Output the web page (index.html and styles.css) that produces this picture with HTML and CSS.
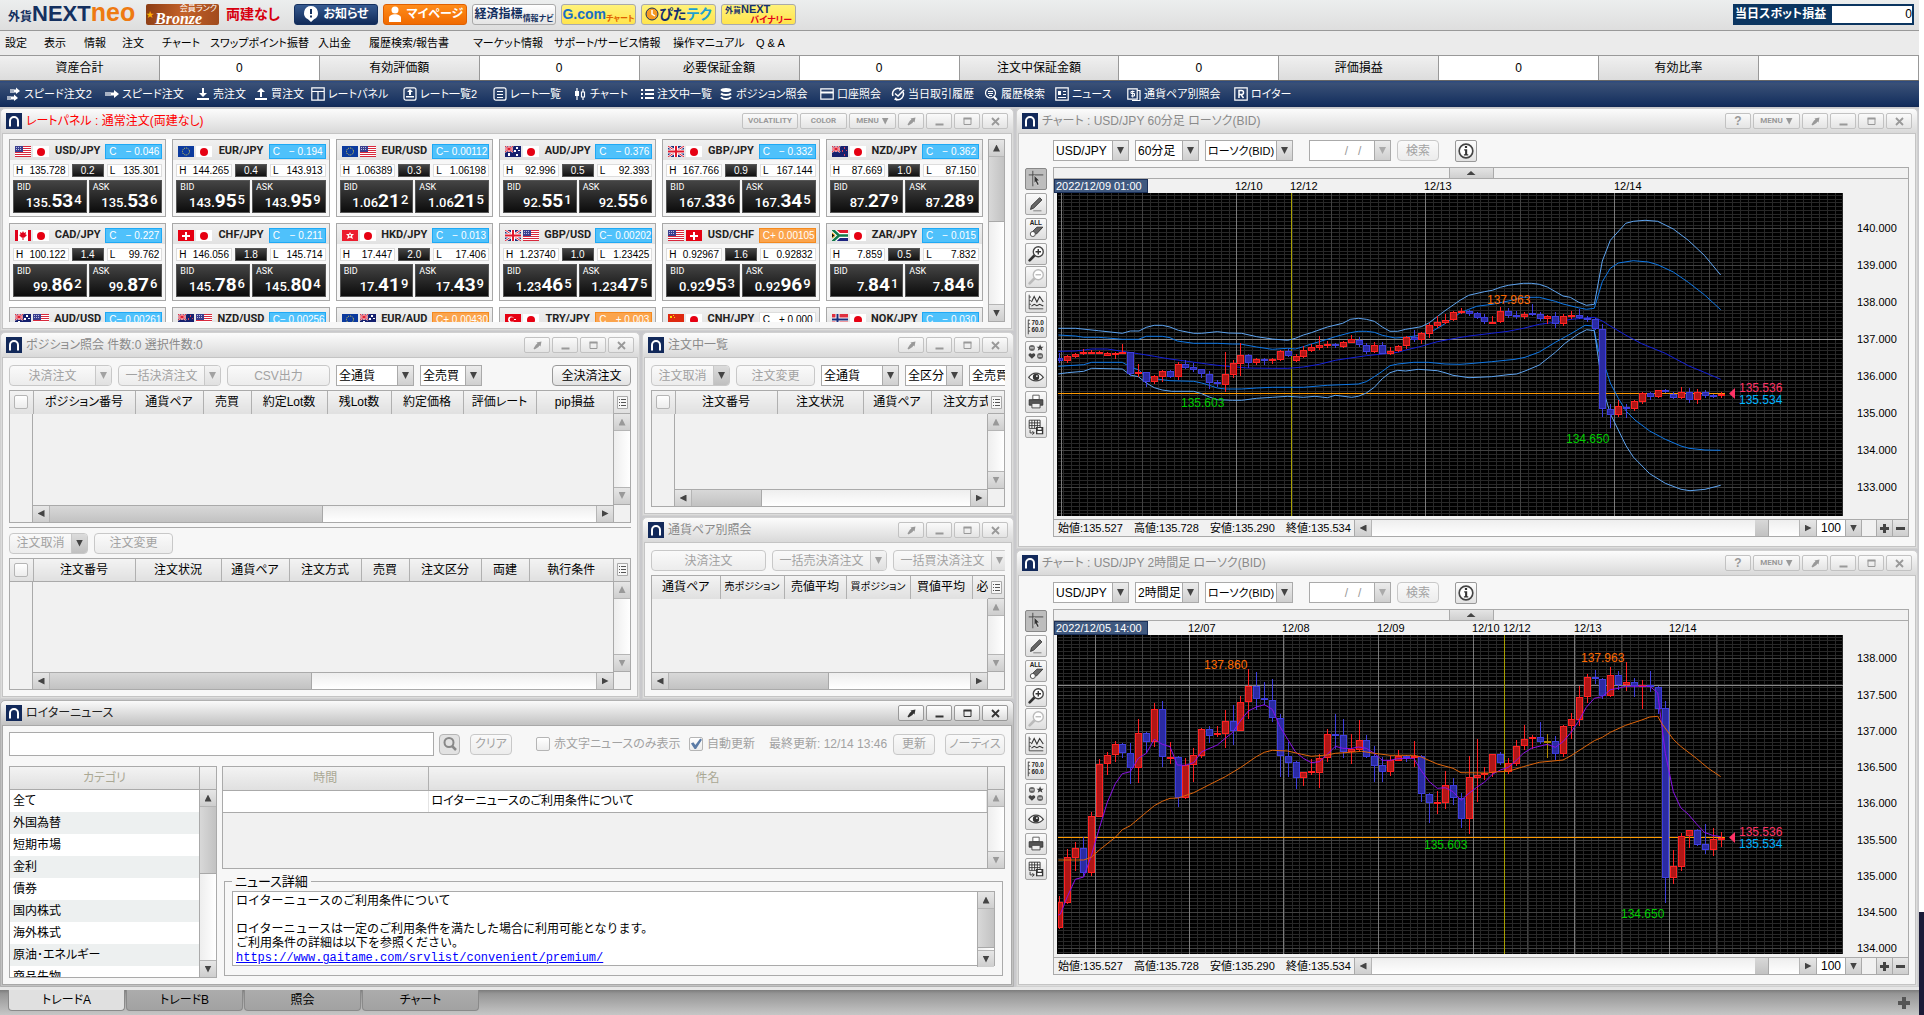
FILE: index.html
```html
<!DOCTYPE html>
<html lang="ja">
<head>
    <meta charset="UTF-8">
    <meta name="viewport" content="width=device-width, initial-scale=1.0">
    <title>外貨NEXTneo</title>
    <link rel="stylesheet" href="styles.css">
</head>
<body>
    <svg class="sprite" aria-hidden="true">
        <!-- flags -->
        <symbol id="flag-us" viewBox="0 0 16 11"><path fill="#fff" d="M0 0h16v11H0z"/><path stroke="#d8283c" d="M0 .5h16M0 2.5h16M0 4.5h16M0 6.5h16M0 8.5h16M0 10.5h16"/><path fill="#3a3f8f" d="M0 0h8v6H0z"/><path stroke="#b8bce0" stroke-dasharray="1 1" d="M1 1.5h6M1 3.5h6"/></symbol>
        <symbol id="flag-jp" viewBox="0 0 16 11"><path fill="#fff" d="M0 0h16v11H0z"/><circle cx="8" cy="6" r="4" fill="#e60012"/></symbol>
        <symbol id="flag-eu" viewBox="0 0 16 11"><path fill="#0b3a9e" d="M0 0h16v11H0z"/><circle cx="8" cy="5.5" r="3.5" fill="none" stroke="#e8d94a" stroke-dasharray="1 1"/></symbol>
        <symbol id="flag-gb" viewBox="0 0 16 11"><path fill="#1c2f7c" d="M0 0h16v11H0z"/><path stroke="#fff" stroke-width="2.4" d="M0 0l16 11M16 0L0 11"/><path stroke="#e0182d" d="M0 0l16 11M16 0L0 11"/><path stroke="#fff" stroke-width="4" d="M8 0v11M0 5.5h16"/><path stroke="#e0182d" stroke-width="2" d="M8 0v11M0 5.5h16"/></symbol>
        <symbol id="flag-au" viewBox="0 0 16 11"><path fill="#15206e" d="M0 0h16v11H0z"/><path stroke="#fff" stroke-width="2" d="M0 0l8 6M8 0L0 6M4 0v6M0 3h8"/><path stroke="#e0182d" d="M0 0l8 6M8 0L0 6M4 0v6M0 3h8"/><path fill="#fff" d="M3 7h2v3H3zM11 1h2v2h-2zM13 4h2v1h-2zM9 4h2v2H9zM11 8h2v2h-2z"/></symbol>
        <symbol id="flag-nz" viewBox="0 0 16 11"><path fill="#15206e" d="M0 0h16v11H0z"/><path stroke="#fff" stroke-width="2" d="M0 0l8 6M8 0L0 6M4 0v6M0 3h8"/><path stroke="#e0182d" d="M0 0l8 6M8 0L0 6M4 0v6M0 3h8"/><path fill="#d8405a" d="M12 1h1v2h-1zM14 4h1v1h-1zM10 4h1v2h-1zM12 8h1v2h-1z"/></symbol>
        <symbol id="flag-ca" viewBox="0 0 16 11"><path fill="#fff" d="M0 0h16v11H0z"/><path fill="#e0001b" d="M0 0h3v11H0zM13 0h3v11h-3zM8 1l1 2 2-1-.5 2.500L12 5 9.500 7.500H8.500V10h-1V7.500h-1L4 5l1.500-.5L5 2l2 1z"/></symbol>
        <symbol id="flag-ch" viewBox="0 0 16 11"><path fill="#e60012" d="M0 0h16v11H0z"/><path fill="#fff" d="M7 2h2v3h3v2H9v3H7V7H4V5h3z"/></symbol>
        <symbol id="flag-hk" viewBox="0 0 16 11"><path fill="#ec1c2e" d="M0 0h16v11H0z"/><path fill="#fff" d="M8 2l1 2h3l-2 2 1 3-3-1.500L5 9l1-3-2-2h3z"/><circle cx="8" cy="5.500" r="1" fill="#ec1c2e"/></symbol>
        <symbol id="flag-za" viewBox="0 0 16 11"><path fill="#e0182d" d="M0 0h16v5.500H0z"/><path fill="#1b2380" d="M0 5.500h16V11H0z"/><path stroke="#fff" stroke-width="5" fill="none" d="M0-1l7 6.500L0 12M7 5.500h9"/><path stroke="#117a4a" stroke-width="2.500" fill="none" d="M0-1l7 6.500L0 12M6 5.500h10"/><path fill="#111" stroke="#f5c518" d="M-1 2l4 3.500-4 3.500z"/></symbol>
        <symbol id="flag-tr" viewBox="0 0 16 11"><path fill="#e60012" d="M0 0h16v11H0z"/><circle cx="6" cy="5.500" r="3" fill="#fff"/><circle cx="7" cy="5.500" r="2.300" fill="#e60012"/><path fill="#fff" d="M9 5h2v1H9z"/></symbol>
        <symbol id="flag-cn" viewBox="0 0 16 11"><path fill="#de2910" d="M0 0h16v11H0z"/><path fill="#ffde00" d="M2 2h2v2H2zM5 1h1v1H5zM6 3h1v1H6z"/></symbol>
        <symbol id="flag-no" viewBox="0 0 16 11"><path fill="#e0303f" d="M0 0h16v11H0z"/><path stroke="#fff" stroke-width="4" d="M5.500 0v11M0 5.500h16"/><path stroke="#1b2f7c" stroke-width="2" d="M5.500 0v11M0 5.500h16"/></symbol>

        <!-- window chrome -->
        <symbol id="app" viewBox="0 0 16 16"><path fill="#12295a" d="M0 0h16v16H0z"/><path fill="none" stroke="#fff" stroke-width="2" d="M4 13.500V8a4 4 0 0 1 8 0v5.500"/></symbol>
        <symbol id="pin" viewBox="0 0 9 9"><path fill="currentColor" d="M8.500.5L7.500 5.500 6.300 4.600 5.500 6 1.500 8.500.5 7.500 3 3.500l1.400-.8L3.500 1.500z"/></symbol>
        <symbol id="min" viewBox="0 0 9 9"><path fill="currentColor" d="M.5 6.500h8v2h-8z"/></symbol>
        <symbol id="max" viewBox="0 0 9 9"><path fill="none" stroke="currentColor" d="M1 1.500h7v6H1z"/><path fill="currentColor" d="M.5.5h8v2h-8z"/></symbol>
        <symbol id="close" viewBox="0 0 9 9"><path stroke="currentColor" stroke-width="1.800" d="M1 1l7 7M8 1L1 8"/></symbol>
        <symbol id="list" viewBox="0 0 11 13"><path fill="#f7f7f7" stroke="#aaa" d="M.5.5h10v12H.5z"/><path stroke="#555" d="M4 3.500h5M4 6.500h5M4 9.500h5M2 3.500h1M2 6.500h1M2 9.500h1"/></symbol>

        <!-- toolbar -->
        <symbol id="t-speed2" viewBox="0 0 14 14"><path stroke="#fff" stroke-width="1.200" d="M4 2v4M6 2v4M1 9v4M3 9v4"/><path fill="#fff" d="M7 2.500h2V.5L13 4 9 7V5.500H7zM4 9.500h3v-2l4 3.500-4 3v-1.500H4z"/></symbol>
        <symbol id="t-speed" viewBox="0 0 14 14"><path stroke="#fff" stroke-width="1.200" d="M1 5v4M3 5v4M5 5v4"/><path fill="#fff" d="M6 5.500h3V3l5 4-5 4V8.500H6z"/></symbol>
        <symbol id="t-sell" viewBox="0 0 14 14"><path fill="#fff" d="M6 1h2v5h3L7 10 3 6h3zM1 11h12v2H1z"/></symbol>
        <symbol id="t-buy" viewBox="0 0 14 14"><path fill="#fff" d="M7 1l4 4H8v5H6V5H3zM1 11h12v2H1z"/></symbol>
        <symbol id="t-panel" viewBox="0 0 14 14"><path fill="none" stroke="#fff" stroke-width="1.200" d="M.8.8h12.400v12.400H.8zM.8 4.500h12.400M7 4.500v9"/></symbol>
        <symbol id="t-rate2" viewBox="0 0 14 14"><rect x="1" y=".8" width="12" height="12.400" rx="2" fill="none" stroke="#fff" stroke-width="1.200"/><path fill="#fff" d="M7 2l3 3H8v3H6V5H4zM3 9h8v1.500H3z"/></symbol>
        <symbol id="t-rate" viewBox="0 0 14 14"><rect x="1" y=".8" width="12" height="12.400" rx="2" fill="none" stroke="#fff" stroke-width="1.200"/><path stroke="#fff" d="M4 4.500h6M4 7.500h6M4 10.500h6"/></symbol>
        <symbol id="t-chart" viewBox="0 0 14 14"><path stroke="#fff" stroke-width="1.200" d="M4 1v12M10 2v11"/><path fill="#fff" d="M2 4h4v5H2z"/><path fill="#1c3867" stroke="#fff" stroke-width="1.200" d="M8.500 5h3v5h-3z"/></symbol>
        <symbol id="t-orders" viewBox="0 0 14 14"><path stroke="#fff" stroke-width="1.800" d="M1 3h2M5 3h9M1 7h2M5 7h9M1 11h2M5 11h9"/></symbol>
        <symbol id="t-position" viewBox="0 0 14 14"><ellipse cx="7" cy="3" rx="5.500" ry="2" fill="#fff"/><path fill="none" stroke="#fff" stroke-width="2" d="M2 6.500c2 2 8 2 10 0M2 10c2 2.500 8 2.500 10 0"/></symbol>
        <symbol id="t-account" viewBox="0 0 14 14"><path fill="none" stroke="#fff" stroke-width="1.200" d="M.8 1.800h12.400v10.400H.8z"/><path fill="#fff" d="M.8 4.500h12.400v2H.8z"/></symbol>
        <symbol id="t-history" viewBox="0 0 14 14"><path fill="none" stroke="#fff" stroke-width="1.500" d="M2 9a5.500 5.500 0 0 1 7-7.300M12 5a5.500 5.500 0 0 1-7 7.300"/><path fill="none" stroke="#fff" stroke-width="1.500" d="M4 6.500L7 9l6-6"/><path fill="#fff" d="M9 0l2.500 2L8 4zM5 10l-2 2.500L6.500 14z"/></symbol>
        <symbol id="t-search" viewBox="0 0 14 14"><circle cx="6.500" cy="6" r="5" fill="none" stroke="#fff" stroke-width="1.200"/><path stroke="#fff" d="M4 4.500h5M4 6.500h5M5 8.500h3"/><path stroke="#fff" stroke-width="2" d="M10 10l3 3"/></symbol>
        <symbol id="t-news" viewBox="0 0 14 14"><path fill="none" stroke="#fff" stroke-width="1.200" d="M.8.8h12.400v12.400H.8z"/><path stroke="#fff" d="M8 4.500h3M8 7.500h3M3 10.500h8"/><path fill="#fff" d="M3 4h3v4H3z"/></symbol>
        <symbol id="t-pair" viewBox="0 0 14 14"><path fill="none" stroke="#fff" stroke-width="1.200" d="M.8 1.800h9.400v10.400H.8zM10 3.500h3v10H5"/><path fill="none" stroke="#fff" d="M7.500 4.500H4v2h3.500v2.500H4M5.700 3.500v7"/></symbol>
        <symbol id="t-reuters" viewBox="0 0 14 14"><path fill="none" stroke="#fff" stroke-width="1.200" d="M.8.8h12.400v12.400H.8z"/><path fill="none" stroke="#fff" stroke-width="1.500" d="M5 11V3.500h2.500a2 2 0 0 1 0 4H5M7 7.500L9.500 11"/></symbol>

        <!-- chart tools -->
        <symbol id="c-cursor" viewBox="0 0 22 22"><path stroke="#444" d="M3 6.500h16M7.500 2v17"/><path fill="#333" stroke="#eee" stroke-width=".6" d="M9 7l6 6h-2.500l2 4-2 1-2-4L9 16z"/></symbol>
        <symbol id="c-pencil" viewBox="0 0 22 22"><path fill="#666" stroke="#333" d="M5 17l1-4 9-9 2.500 2.500-9 9z"/><path stroke="#777" d="M8 18.500h9"/></symbol>
        <symbol id="c-eraser" viewBox="0 0 22 22"><text x="4" y="7" class="icon-text">ALL</text><path fill="#666" stroke="#333" d="M6 15l6-6h6.500l-7 7.500z"/><circle cx="7.500" cy="16.500" r="2.800" fill="#fff" stroke="#444"/></symbol>
        <symbol id="c-zoomin" viewBox="0 0 22 22"><path stroke="#333" stroke-width="3" stroke-linecap="round" d="M4 18l5-5"/><circle cx="13.500" cy="8.500" r="5.500" fill="#fff" stroke="#444" stroke-width="1.500"/><path stroke="#333" stroke-width="1.500" d="M10.500 8.500h6M13.500 5.500v6"/></symbol>
        <symbol id="c-zoomout" viewBox="0 0 22 22"><path stroke="#bbb" stroke-width="3" stroke-linecap="round" d="M4 18l5-5"/><circle cx="13.500" cy="8.500" r="5.500" fill="#fff" stroke="#bbb" stroke-width="1.500"/><path stroke="#bbb" stroke-width="1.500" d="M10.500 8.500h6"/></symbol>
        <symbol id="c-lines" viewBox="0 0 22 22"><path fill="none" stroke="#444" d="M3.500 3v15.500H19M3.500 5.500h2M3.500 9.500h2M3.500 13.500h2"/><path fill="none" stroke="#333" stroke-width="1.200" d="M6 11l3-6 3 6 3-6 4 6M6 15.500l3-2 3 1.500 3-1.500 4 2"/></symbol>
        <symbol id="c-scale" viewBox="0 0 22 22"><path fill="none" stroke="#444" d="M2.500 3v16M2.500 3.500h2M2.500 7.500h2M2.500 11.500h2M2.500 15.500h2"/><text x="6" y="9" class="icon-text">70.0</text><text x="6" y="17" class="icon-text">60.0</text></symbol>
        <symbol id="c-shapes" viewBox="0 0 22 22"><circle cx="6.500" cy="6.500" r="3.300" fill="#666"/><path fill="#444" d="M15.500 2.500l1.200 2.600h2.800l-2.200 1.800.8 2.800-2.600-1.600-2.600 1.600.8-2.800-2.200-1.800h2.800zM6.500 18.500L3 15c-1-2 2-4 3.500-1.500C8 11 11 13 10 15z"/><circle cx="15.500" cy="15.500" r="3.300" fill="#666"/><path stroke="#fff" d="M4.500 6.500h4M13.500 15.500h4"/></symbol>
        <symbol id="c-eye" viewBox="0 0 22 22"><path fill="#fff" stroke="#444" stroke-width="1.400" d="M3 11.500c4-6.500 12-6.500 16 0-4 5-12 5-16 0z"/><circle cx="11" cy="11" r="3.500" fill="#333"/><circle cx="12" cy="10" r="1" fill="#fff"/></symbol>
        <symbol id="c-print" viewBox="0 0 22 22"><path fill="#fff" stroke="#555" d="M7.500 3.500h7v5h-7z"/><path fill="#555" stroke="#333" d="M3.500 8.500h15v6h-15z"/><path fill="#eee" stroke="#444" d="M6.500 12.500h9v5h-9z"/></symbol>
        <symbol id="c-save" viewBox="0 0 22 22"><path fill="#fff" stroke="#333" d="M3.500 3.500h12v9h-12zM3.500 6.500h12M3.500 9.500h12M6.500 3.500v9M9.500 3.500v9M12.500 3.500v9"/><path fill="none" stroke="#333" d="M4.500 14v3.500H9M7 15.500l2 2-2 2"/><path fill="#333" d="M11 11h8v8h-8z"/><path fill="#fff" d="M13 12h4v2h-4zM12.500 15.500h5V18h-5z"/></symbol>
        <symbol id="c-info" viewBox="0 0 22 22"><circle cx="11" cy="11" r="7.500" fill="#fff" stroke="#444" stroke-width="1.800"/><path fill="#333" d="M9.800 5.500h2.400v2.200H9.800zM9 9h3.300v5.500h1.200V16H8.700v-1.500H10v-4H9z"/></symbol>
    </svg>

    <div class="app">
        <header class="topbar">
            <a class="logo" href="#"><span class="logo-small">外貨</span><span class="logo-next">NEXT</span><span class="logo-neo">neo</span></a>
            <a class="rank" href="#"><span class="rank-star">★</span><span class="rank-name">Bronze</span><span class="rank-label">会員ランク</span></a>
            <strong class="hedge">両建なし</strong>
            <nav class="banners">
                <a class="banner banner-navy" href="#"><svg viewBox="0 0 16 18"><path fill="#fff" d="M8 1a7 7 0 0 1 3 13.300L8 17l-3-2.700A7 7 0 0 1 8 1z"/><path fill="#14305f" d="M7 4h2v5H7zM7 10.500h2v2H7z"/></svg>お知らせ</a>
                <a class="banner banner-orange" href="#"><svg viewBox="0 0 14 18"><circle cx="7" cy="5" r="3.500" fill="#fff"/><path fill="#fff" d="M1 17v-4c0-5 12-5 12 0v4z"/></svg>マイページ</a>
                <a class="banner banner-white" href="#"><span>経済指標</span><small>情報ナビ</small></a>
                <a class="banner banner-yellow banner-gcom" href="#"><span>G.com</span><small>チャート</small></a>
                <a class="banner banner-yellow banner-pita" href="#"><svg viewBox="0 0 14 14"><circle cx="7" cy="7" r="6" fill="#f59a23" stroke="#14305f"/><path fill="none" stroke="#fff" stroke-width="1.500" d="M7 3v4l3 2"/></svg><span>ぴた<i>テク</i></span></a>
                <a class="banner banner-yellow banner-binary" href="#"><span>外貨<b>NEXT</b></span><small>バイナリー</small></a>
            </nav>
            <div class="spot">
                <label for="spot">当日スポット損益</label>
                <input id="spot" type="text" value="0" readonly>
            </div>
        </header>

        <nav class="menu">
            <a href="#">設定</a><a href="#">表示</a><a href="#">情報</a><a href="#">注文</a><a href="#">チャート</a><a href="#">スワップポイント振替</a><a href="#">入出金</a><a href="#">履歴検索/報告書</a><a href="#">マーケット情報</a><a href="#">サポート/サービス情報</a><a href="#">操作マニュアル</a><a href="#">Q &amp; A</a>
        </nav>

        <dl class="assets">
            <dt>資産合計</dt><dd>0</dd>
            <dt>有効評価額</dt><dd>0</dd>
            <dt>必要保証金額</dt><dd>0</dd>
            <dt>注文中保証金額</dt><dd>0</dd>
            <dt>評価損益</dt><dd>0</dd>
            <dt>有効比率</dt><dd></dd>
        </dl>

        <nav class="toolbar">
            <a href="#"><svg><use href="#t-speed2"/></svg>スピード注文2</a>
            <a href="#"><svg><use href="#t-speed"/></svg>スピード注文</a>
            <a href="#"><svg><use href="#t-sell"/></svg>売注文</a>
            <a href="#"><svg><use href="#t-buy"/></svg>買注文</a>
            <a href="#"><svg><use href="#t-panel"/></svg>レートパネル</a>
            <a href="#"><svg><use href="#t-rate2"/></svg>レート一覧2</a>
            <a href="#"><svg><use href="#t-rate"/></svg>レート一覧</a>
            <a href="#"><svg><use href="#t-chart"/></svg>チャート</a>
            <a href="#"><svg><use href="#t-orders"/></svg>注文中一覧</a>
            <a href="#"><svg><use href="#t-position"/></svg>ポジション照会</a>
            <a href="#"><svg><use href="#t-account"/></svg>口座照会</a>
            <a href="#"><svg><use href="#t-history"/></svg>当日取引履歴</a>
            <a href="#"><svg><use href="#t-search"/></svg>履歴検索</a>
            <a href="#"><svg><use href="#t-news"/></svg>ニュース</a>
            <a href="#"><svg><use href="#t-pair"/></svg>通貨ペア別照会</a>
            <a href="#"><svg><use href="#t-reuters"/></svg>ロイター</a>
        </nav>

        <main class="desktop">
            <div class="left">
                <section class="window">
                    <div class="titlebar alert">
                        <svg class="app-icon"><use href="#app"/></svg>
                        <h2>レートパネル : 通常注文(両建なし)</h2>
                        <button class="w56 wide">VOLATILITY</button>
                        <button class="w47 wide">COLOR</button>
                        <button class="w47 wide">MENU <i class="down"></i></button>
                        <span class="controls"></span>
                    </div>
                    <div class="content rates">
                        <div class="cards" id="cards"></div>
                        <div class="vscroll">
                            <button aria-label="上へ"><i class="up"></i></button>
                            <div class="track"><div class="thumb" style="height: 44%"></div></div>
                            <button aria-label="下へ"><i class="down"></i></button>
                        </div>
                    </div>
                </section>

                <div class="middle">
                    <section class="window">
                        <div class="titlebar">
                            <svg class="app-icon"><use href="#app"/></svg>
                            <h2>ポジション照会 件数:0 選択件数:0</h2>
                            <span class="controls"></span>
                        </div>
                        <div class="content">
                            <div class="tools">
                                <div class="split w103"><button disabled>決済注文</button><button class="drop" disabled aria-label="決済注文の種類"><i class="down"></i></button></div>
                                <div class="split w103"><button disabled>一括決済注文</button><button class="drop" disabled aria-label="一括決済注文の種類"><i class="down"></i></button></div>
                                <button class="btn w103" disabled>CSV出力</button>
                                <span class="combo w78"><select aria-label="通貨"><option>全通貨</option></select><i class="down"></i></span>
                                <span class="combo w62"><select aria-label="売買"><option>全売買</option></select><i class="down"></i></span>
                                <button class="btn w79 push">全決済注文</button>
                            </div>
                            <div class="listing">
                                <div class="head">
                                    <table>
                                        <thead><tr><th class="w23"><input type="checkbox" aria-label="全選択"></th><th class="w102">ポジション番号</th><th class="w68">通貨ペア</th><th class="w48">売買</th><th class="w76">約定Lot数</th><th class="w64">残Lot数</th><th class="w72">約定価格</th><th class="w73">評価レート</th><th>pip損益</th></tr></thead>
                                    </table>
                                </div>
                                <button class="corner" aria-label="表示項目"><svg><use href="#list"/></svg></button>
                                <div class="rows frozen"></div>
                                <div class="vscroll off">
                                    <button disabled aria-label="上へ"><i class="up"></i></button>
                                    <div class="track"></div>
                                    <button disabled aria-label="下へ"><i class="down"></i></button>
                                </div>
                                <div class="hscroll frozen">
                                    <button aria-label="左へ"><i class="lt"></i></button>
                                    <div class="track"><div class="thumb" style="width: 50%"></div></div>
                                    <button aria-label="右へ"><i class="rt"></i></button>
                                </div>
                            </div>
                            <hr>
                            <div class="tools">
                                <div class="split w79"><button disabled>注文取消</button><button class="drop on" aria-label="注文取消の種類"><i class="down"></i></button></div>
                                <button class="btn w79" disabled>注文変更</button>
                            </div>
                            <div class="listing">
                                <div class="head">
                                    <table>
                                        <thead><tr><th class="w23"><input type="checkbox" aria-label="全選択"></th><th class="w102">注文番号</th><th class="w86">注文状況</th><th class="w68">通貨ペア</th><th class="w72">注文方式</th><th class="w48">売買</th><th class="w72">注文区分</th><th class="w48">両建</th><th>執行条件</th></tr></thead>
                                    </table>
                                </div>
                                <button class="corner" aria-label="表示項目"><svg><use href="#list"/></svg></button>
                                <div class="rows frozen"></div>
                                <div class="vscroll off">
                                    <button disabled aria-label="上へ"><i class="up"></i></button>
                                    <div class="track"></div>
                                    <button disabled aria-label="下へ"><i class="down"></i></button>
                                </div>
                                <div class="hscroll frozen">
                                    <button aria-label="左へ"><i class="lt"></i></button>
                                    <div class="track"><div class="thumb" style="width: 48%"></div></div>
                                    <button aria-label="右へ"><i class="rt"></i></button>
                                </div>
                            </div>
                        </div>
                    </section>

                    <div class="orders">
                        <section class="window">
                            <div class="titlebar">
                                <svg class="app-icon"><use href="#app"/></svg>
                                <h2>注文中一覧</h2>
                                <span class="controls"></span>
                            </div>
                            <div class="content">
                                <div class="tools">
                                    <div class="split w79"><button disabled>注文取消</button><button class="drop on" aria-label="注文取消の種類"><i class="down"></i></button></div>
                                    <button class="btn w79" disabled>注文変更</button>
                                    <span class="combo w78"><select aria-label="通貨"><option>全通貨</option></select><i class="down"></i></span>
                                    <span class="combo w58"><select aria-label="区分"><option>全区分</option></select><i class="down"></i></span>
                                    <span class="combo w62"><select aria-label="売買"><option>全売買</option></select><i class="down"></i></span>
                                </div>
                                <div class="listing">
                                    <div class="head">
                                        <table class="w351">
                                            <thead><tr><th class="w23"><input type="checkbox" aria-label="全選択"></th><th class="w102">注文番号</th><th class="w86">注文状況</th><th class="w68">通貨ペア</th><th class="w72">注文方式</th></tr></thead>
                                        </table>
                                    </div>
                                    <button class="corner" aria-label="表示項目"><svg><use href="#list"/></svg></button>
                                    <div class="rows frozen"></div>
                                    <div class="vscroll off">
                                        <button disabled aria-label="上へ"><i class="up"></i></button>
                                        <div class="track"></div>
                                        <button disabled aria-label="下へ"><i class="down"></i></button>
                                    </div>
                                    <div class="hscroll frozen">
                                        <button aria-label="左へ"><i class="lt"></i></button>
                                        <div class="track"><div class="thumb" style="width: 25%"></div></div>
                                        <button aria-label="右へ"><i class="rt"></i></button>
                                    </div>
                                </div>
                            </div>
                        </section>

                        <section class="window">
                            <div class="titlebar">
                                <svg class="app-icon"><use href="#app"/></svg>
                                <h2>通貨ペア別照会</h2>
                                <span class="controls"></span>
                            </div>
                            <div class="content">
                                <div class="tools">
                                    <button class="btn w115" disabled>決済注文</button>
                                    <div class="split w115"><button disabled>一括売決済注文</button><button class="drop" disabled aria-label="一括売決済注文の種類"><i class="down"></i></button></div>
                                    <div class="split w115"><button disabled>一括買決済注文</button><button class="drop" disabled aria-label="一括買決済注文の種類"><i class="down"></i></button></div>
                                </div>
                                <div class="listing">
                                    <div class="head">
                                        <table class="w378">
                                            <thead><tr><th class="w68">通貨ペア</th><th class="w64 tight">売ポジション</th><th class="w62">売値平均</th><th class="w64 tight">買ポジション</th><th class="w62">買値平均</th><th class="w58 first">必要額</th></tr></thead>
                                        </table>
                                    </div>
                                    <button class="corner" aria-label="表示項目"><svg><use href="#list"/></svg></button>
                                    <div class="rows"></div>
                                    <div class="vscroll off">
                                        <button disabled aria-label="上へ"><i class="up"></i></button>
                                        <div class="track"></div>
                                        <button disabled aria-label="下へ"><i class="down"></i></button>
                                    </div>
                                    <div class="hscroll">
                                        <button aria-label="左へ"><i class="lt"></i></button>
                                        <div class="track"><div class="thumb" style="width: 53%"></div></div>
                                        <button aria-label="右へ"><i class="rt"></i></button>
                                    </div>
                                </div>
                            </div>
                        </section>
                    </div>
                </div>

                <section class="window active">
                    <div class="titlebar">
                        <svg class="app-icon"><use href="#app"/></svg>
                        <h2>ロイターニュース</h2>
                        <span class="controls"></span>
                    </div>
                    <div class="content">
                        <form class="news-search">
                            <input class="keyword" type="text" aria-label="キーワード">
                            <button class="btn find" type="button" aria-label="検索"><svg viewBox="0 0 16 16"><circle cx="7" cy="6.500" r="4.500" fill="none" stroke="#888" stroke-width="2"/><path stroke="#888" stroke-width="2.500" d="M10 10l4 4"/></svg></button>
                            <button class="btn w42" type="button" disabled>クリア</button>
                            <label class="red-only"><input type="checkbox" disabled>赤文字ニュースのみ表示</label>
                            <label class="auto"><input type="checkbox" checked disabled>自動更新</label>
                            <span class="updated">最終更新: 12/14 13:46</span>
                            <button class="btn w42" type="button" disabled>更新</button>
                            <button class="btn w60" type="button" disabled>ノーティス</button>
                        </form>
                        <div class="news">
                            <div class="categories">
                                <div class="list-head">カテゴリ</div>
                                <div class="list-corner"></div>
                                <ul>
                                    <li>全て</li><li>外国為替</li><li>短期市場</li><li>金利</li><li>債券</li><li>国内株式</li><li>海外株式</li><li>原油･エネルギー</li><li>商品先物</li>
                                </ul>
                                <div class="vscroll">
                                    <button aria-label="上へ"><i class="up"></i></button>
                                    <div class="track"><div class="thumb" style="height: 44%"></div></div>
                                    <button aria-label="下へ"><i class="down"></i></button>
                                </div>
                            </div>
                            <div class="articles">
                                <div class="headlines">
                                    <table>
                                        <thead><tr><th class="w205">時間</th><th>件名</th></tr></thead>
                                        <tbody><tr><td></td><td>ロイターニュースのご利用条件について</td></tr></tbody>
                                    </table>
                                    <div class="side">
                                        <div class="list-corner"></div>
                                        <div class="vscroll off">
                                            <button disabled aria-label="上へ"><i class="up"></i></button>
                                            <div class="track"></div>
                                            <button disabled aria-label="下へ"><i class="down"></i></button>
                                        </div>
                                    </div>
                                </div>
                                <fieldset>
                                    <legend>ニュース詳細</legend>
                                    <div class="detail">
                                        <p>ロイターニュースのご利用条件について<br><br>ロイターニュースは一定のご利用条件を満たした場合に利用可能となります。<br>ご利用条件の詳細は以下を参照ください。<br><a href="#">https://www.gaitame.com/srvlist/convenient/premium/</a></p>
                                        <div class="vscroll">
                                            <button aria-label="上へ"><i class="up"></i></button>
                                            <div class="track"><div class="thumb" style="height: 94%"></div></div>
                                            <button aria-label="下へ"><i class="down"></i></button>
                                        </div>
                                    </div>
                                </fieldset>
                            </div>
                        </div>
                    </div>
                </section>
            </div>

            <div class="right">
                <section class="window">
                    <div class="titlebar">
                        <svg class="app-icon"><use href="#app"/></svg>
                        <h2>チャート : USD/JPY 60分足 ローソク(BID)</h2>
                        <button class="w26 help">?</button>
                        <button class="w47 wide">MENU <i class="down"></i></button>
                        <span class="controls"></span>
                    </div>
                    <div class="content chart">
                        <div class="toolbox"></div>
                        <div class="chart-tools">
                            <span class="combo w76"><select aria-label="通貨ペア"><option>USD/JPY</option></select><i class="down"></i></span>
                            <span class="combo w64"><select aria-label="足種"><option>60分足</option></select><i class="down"></i></span>
                            <span class="combo w88"><select aria-label="チャート種類"><option>ローソク(BID)</option></select><i class="down"></i></span>
                            <span class="combo date off"><input type="text" value="/   /" disabled aria-label="日付"><i class="down"></i></span>
                            <button class="btn w42" disabled>検索</button>
                            <button class="btn info" aria-label="情報"><svg><use href="#c-info"/></svg></button>
                        </div>
                        <div class="chart-box">
                            <div class="fold"><button aria-label="折りたたむ"><i class="up"></i></button></div>
                            <svg class="plot" id="chart60"></svg>
                            <div class="chart-foot">
                                <div class="ohlc"><span>始値:135.527</span><span>高値:135.728</span><span>安値:135.290</span><span>終値:135.534</span></div>
                                <div class="hscroll">
                                    <button aria-label="左へ"><i class="lt"></i></button>
                                    <div class="track end"><div class="thumb" style="width: 14px"></div></div>
                                    <button aria-label="右へ"><i class="rt"></i></button>
                                </div>
                                <input class="count" type="text" value="100" aria-label="表示本数">
                                <button class="mini" aria-label="表示本数を選択"><i class="down"></i></button>
                                <span class="gap"></span>
                                <button class="mini sign" aria-label="拡大"><svg viewBox="0 0 9 9"><path stroke="#444" stroke-width="3" d="M0 4.500h9M4.500 0v9"/></svg></button>
                                <button class="mini sign" aria-label="縮小"><svg viewBox="0 0 9 9"><path stroke="#444" stroke-width="3" d="M0 4.500h9"/></svg></button>
                            </div>
                        </div>
                    </div>
                </section>

                <section class="window">
                    <div class="titlebar">
                        <svg class="app-icon"><use href="#app"/></svg>
                        <h2>チャート : USD/JPY 2時間足 ローソク(BID)</h2>
                        <button class="w26 help">?</button>
                        <button class="w47 wide">MENU <i class="down"></i></button>
                        <span class="controls"></span>
                    </div>
                    <div class="content chart">
                        <div class="toolbox"></div>
                        <div class="chart-tools">
                            <span class="combo w76"><select aria-label="通貨ペア"><option>USD/JPY</option></select><i class="down"></i></span>
                            <span class="combo w64"><select aria-label="足種"><option>2時間足</option></select><i class="down"></i></span>
                            <span class="combo w88"><select aria-label="チャート種類"><option>ローソク(BID)</option></select><i class="down"></i></span>
                            <span class="combo date off"><input type="text" value="/   /" disabled aria-label="日付"><i class="down"></i></span>
                            <button class="btn w42" disabled>検索</button>
                            <button class="btn info" aria-label="情報"><svg><use href="#c-info"/></svg></button>
                        </div>
                        <div class="chart-box">
                            <div class="fold"><button aria-label="折りたたむ"><i class="up"></i></button></div>
                            <svg class="plot" id="chart120"></svg>
                            <div class="chart-foot">
                                <div class="ohlc"><span>始値:135.527</span><span>高値:135.728</span><span>安値:135.290</span><span>終値:135.534</span></div>
                                <div class="hscroll">
                                    <button aria-label="左へ"><i class="lt"></i></button>
                                    <div class="track end"><div class="thumb" style="width: 14px"></div></div>
                                    <button aria-label="右へ"><i class="rt"></i></button>
                                </div>
                                <input class="count" type="text" value="100" aria-label="表示本数">
                                <button class="mini" aria-label="表示本数を選択"><i class="down"></i></button>
                                <span class="gap"></span>
                                <button class="mini sign" aria-label="拡大"><svg viewBox="0 0 9 9"><path stroke="#444" stroke-width="3" d="M0 4.500h9M4.500 0v9"/></svg></button>
                                <button class="mini sign" aria-label="縮小"><svg viewBox="0 0 9 9"><path stroke="#444" stroke-width="3" d="M0 4.500h9"/></svg></button>
                            </div>
                        </div>
                    </div>
                </section>
            </div>
        </main>

        <footer class="tabs">
            <button class="tab current">トレードA</button>
            <button class="tab">トレードB</button>
            <button class="tab">照会</button>
            <button class="tab">チャート</button>
            <button class="add" aria-label="タブを追加"><svg viewBox="0 0 12 12"><path stroke="#555" stroke-width="4" d="M0 6h12M6 0v12"/></svg></button>
        </footer>
    </div>
    <div class="edge"></div>

    <script src="script.js"></script>
</body>
</html>
```

FILE: styles.css
```css
/* General Styles */
* {
    box-sizing: border-box;
}

body {
    margin: 0;
    display: flex;
    height: 100vh;
    overflow: hidden;
    font-family: "Liberation Sans", "Noto Sans CJK JP", sans-serif;
    font-size: 12px;
    line-height: 16px;
    font-feature-settings: "palt";
    color: #000;
    background: #fff;
}

button, input, select {
    font: inherit;
    font-feature-settings: inherit;
    color: inherit;
    margin: 0;
    padding: 0;
    border: 0;
    border-radius: 0;
    background: none;
    min-width: 0;
    outline: none;
}

a {
    color: inherit;
    text-decoration: none;
}

svg {
    display: block;
}

.sprite {
    display: none;
}

.app {
    flex: 1;
    min-width: 0;
    display: flex;
    flex-direction: column;
    background: #c9c9cc;
}

.edge {
    width: 5px;
    background: linear-gradient(#fff 912px, #1b1b38 912px);
}

/* Arrows */
.up, .down, .lt, .rt {
    display: block;
    width: 7px;
    height: 7px;
    background: #444;
}

.down { clip-path: polygon(0 0, 100% 0, 50% 100%); }
.up { clip-path: polygon(50% 0, 100% 100%, 0 100%); }
.lt { clip-path: polygon(0 50%, 100% 0, 100% 100%); }
.rt { clip-path: polygon(0 0, 100% 50%, 0 100%); }

/* Shared widths */
.w23 { width: 23px; }
.w26 { width: 26px; }
.w42 { width: 42px; }
.w47 { width: 47px; }
.w48 { width: 48px; }
.w56 { width: 56px; }
.w58 { width: 58px; }
.w60 { width: 60px; }
.w62 { width: 62px; }
.w64 { width: 64px; }
.w68 { width: 68px; }
.w72 { width: 72px; }
.w73 { width: 73px; }
.w76 { width: 76px; }
.w78 { width: 78px; }
.w79 { width: 79px; }
.w86 { width: 86px; }
.w88 { width: 88px; }
.w102 { width: 102px; }
.w103 { width: 103px; }
.w115 { width: 115px; }
.w205 { width: 205px; }

/* Top bar */
.topbar {
    height: 31px;
    display: flex;
    align-items: center;
    padding: 0 5px 2px 8px;
    background: linear-gradient(#eceeee, #dedede);
    border-bottom: 1px solid #999;
}

.logo {
    display: flex;
    align-items: baseline;
    width: 138px;
    color: #14305f;
    font-weight: bold;
    line-height: 26px;
}

.logo-small { font-size: 12px; }
.logo-next { font-size: 22px; }
.logo-neo { font-size: 25px; color: #ee7a12; }

.rank {
    display: grid;
    grid-template-columns: 9px 1fr;
    grid-template-rows: 9px 12px;
    width: 73px;
    height: 21px;
    color: #fff;
    background: linear-gradient(100deg, #8a3c14, #c4622a 50%, #a04a1c);
    border-radius: 2px;
}

.rank-star {
    grid-row: 1 / 3;
    color: #ffb000;
    font-size: 8px;
    line-height: 21px;
}

.rank-name {
    grid-row: 2;
    grid-column: 2;
    font: italic bold 16px/11px "Liberation Serif", serif;
}

.rank-label {
    grid-row: 1;
    grid-column: 2;
    justify-self: end;
    padding-right: 2px;
    font-size: 8px;
    line-height: 10px;
}

.hedge {
    width: 75px;
    padding-left: 7px;
    font-size: 14px;
    color: #d7000f;
}

.banners {
    display: flex;
    gap: 5px;
}

.banner {
    display: flex;
    align-items: center;
    justify-content: center;
    gap: 4px;
    width: 84px;
    height: 21px;
    border-radius: 3px;
    border: 1px solid #aaa;
    font-weight: bold;
    white-space: nowrap;
}

.banner svg {
    width: 16px;
    height: 18px;
}

.banner small {
    font-size: 8px;
    align-self: flex-end;
    line-height: 11px;
}

.banner-navy {
    color: #fff;
    background: linear-gradient(#365a90, #102a58);
    border-color: #14305f;
}

.banner-orange {
    color: #fff;
    background: linear-gradient(#ff8c1a, #f06a00);
    border-color: #e06000;
}

.banner-white {
    gap: 0;
    color: #14305f;
    background: linear-gradient(#fff, #e4e4e4);
}

.banner-yellow {
    gap: 0;
    width: 75px;
    background: linear-gradient(#fff27a, #ffe44d);
    color: #14306f;
}

.banner-gcom span { font-size: 14px; color: #1a6fc4; }
.banner-gcom small { color: #e06000; }
.banner-pita span { font-size: 14px; }
.banner-pita i { font-style: normal; color: #1ca0d0; }
.banner-pita svg { width: 14px; }

.banner-binary {
    flex-direction: column;
    padding: 0 3px;
}

.banner-binary span {
    align-self: flex-start;
    font-size: 8px;
    line-height: 10px;
}

.banner-binary b { font-size: 11px; }

.banner-binary small {
    color: #e3001b;
    font-size: 9px;
    line-height: 9px;
}

.spot {
    margin-left: auto;
    display: flex;
    align-items: center;
    width: 181px;
    height: 21px;
    padding: 2px;
    background: #0b3560;
    color: #fff;
}

.spot label {
    width: 97px;
    font-weight: bold;
    white-space: nowrap;
}

.spot input {
    flex: 1;
    height: 17px;
    background: #fff;
    color: #000;
    text-align: right;
}

/* Menu */
.menu {
    height: 25px;
    display: grid;
    grid-template-columns: 39px 40px 38px 40px 48px 108px 51px 104px 81px 119px 83px 1fr;
    align-items: center;
    padding-left: 5px;
    background: #ebebeb;
    border-bottom: 1px solid #999;
    font-size: 11px;
    white-space: nowrap;
}

/* Asset summary */
.assets {
    display: grid;
    grid-template-columns: repeat(12, 1fr);
    height: 24px;
    margin: 0;
    line-height: 24px;
    text-align: center;
}

.assets dt, .assets dd {
    margin: 0;
    border-right: 1px solid #999;
}

.assets dt {
    background: linear-gradient(#f0f0f0, #dcdcdc);
}

.assets dd {
    background: #fff;
}

/* Toolbar */
.toolbar {
    height: 27px;
    display: grid;
    grid-template-columns: 98px 91px 58px 57px 92px 90px 80px 67px 79px 101px 71px 93px 71px 72px 107px 1fr;
    align-items: center;
    padding-left: 7px;
    color: #fff;
    background: linear-gradient(#2c4a80, #3a5076 10%, #15305f 90%, #122853);
    border-top: 1px solid #666;
    font-size: 11px;
    white-space: nowrap;
}

.toolbar a {
    display: flex;
    align-items: center;
    gap: 3px;
}

.toolbar svg {
    width: 14px;
    height: 14px;
    flex: none;
}

/* Desktop */
.desktop {
    flex: 1;
    min-height: 0;
    display: grid;
    grid-template-columns: minmax(0, 1014fr) minmax(0, 902fr);
    gap: 2px;
    padding: 1px 1px 0 0;
}

.left, .right, .middle, .orders {
    display: grid;
    min-height: 0;
    gap: 1px;
}

.left { grid-template-rows: minmax(0, 223fr) minmax(0, 367fr) minmax(0, 287fr); }
.right { grid-template-rows: minmax(0, 441fr) minmax(0, 437fr); }
.orders { grid-template-rows: minmax(0, 184fr) minmax(0, 182fr); }

.middle {
    grid-template-columns: minmax(0, 640fr) minmax(0, 372fr);
    column-gap: 2px;
}

/* Window */
.window {
    display: flex;
    flex-direction: column;
    min-width: 0;
    min-height: 0;
    padding: 0 1px 1px;
    border: 1px solid #d0d0d0;
    border-radius: 5px 5px 0 0;
    background: #dcdcdc linear-gradient(#fcfcfc, #d9d9d9) no-repeat 0 0 / 100% 24px;
}

.window.active {
    border-color: #b0b0b0;
    background: #c2c2c2 linear-gradient(#fafafa, #c2c2c2) no-repeat 0 0 / 100% 24px;
}

.titlebar {
    height: 24px;
    flex: none;
    display: flex;
    align-items: center;
    gap: 2px;
    padding: 0 4px;
    color: #999;
}

.titlebar h2 {
    flex: 1;
    margin: 0;
    padding-left: 2px;
    font-size: 12px;
    font-weight: normal;
    color: #8a8a8a;
}

.titlebar.alert h2 { color: #f00; }
.active .titlebar h2 { color: #222; }
.active .titlebar { color: #333; }

.app-icon {
    width: 16px;
    height: 16px;
}

.controls {
    display: flex;
    gap: 2px;
}

.titlebar button {
    display: flex;
    align-items: center;
    justify-content: center;
    height: 16px;
    border: 1px solid #c2c2c2;
    border-radius: 2px;
    background: linear-gradient(#fafafa, #e4e4e4);
}

.active .titlebar button {
    border-color: #999;
    background: linear-gradient(#fff, #ddd);
}

.titlebar button svg {
    width: 9px;
    height: 9px;
}

.titlebar .wide {
    gap: 3px;
    font: bold 8px/14px Roboto, sans-serif;
}

.titlebar .down { background: #999; }

.help {
    font-weight: bold;
}

.content {
    flex: 1;
    min-height: 0;
    display: flex;
    flex-direction: column;
    gap: 4px;
    padding: 7px 6px 6px;
    border: 1px solid #c4c4c4;
    background: #f7f7f7;
}

.active .content {
    border-color: #a8a8a8;
}

/* Buttons and combos */
.tools {
    display: flex;
    flex: none;
    gap: 6px;
    height: 21px;
    overflow: hidden;
}

.tools > * {
    flex: none;
}

.btn, .split {
    height: 21px;
    border: 1px solid #999;
    border-radius: 4px;
    background: linear-gradient(#fcfcfc, #e2e2e2);
    text-align: center;
    white-space: nowrap;
}

.btn:disabled, .split {
    border-color: #c8c8c8;
    color: #a2a2a2;
    background: linear-gradient(#fafafa, #ececec);
}

.split {
    display: flex;
    overflow: hidden;
}

.split button {
    flex: 1;
    color: #a2a2a2;
}

.split .drop {
    flex: 0 0 16px;
    display: flex;
    align-items: center;
    justify-content: center;
    border-left: 1px solid #c8c8c8;
    background: linear-gradient(#f4f4f4, #e0e0e0);
}

.split .drop .down { background: #a2a2a2; }

.split .drop.on {
    background: linear-gradient(#dcdcdc, #c0c0c0);
}

.split .drop.on .down { background: #444; }

.push {
    margin-left: auto;
}

.combo {
    display: flex;
    align-items: center;
    height: 21px;
    border: 1px solid #aaa;
    background: linear-gradient(#ececec, #cfcfcf) no-repeat right / 15px 100%, #fff;
    padding-right: 4px;
}

.combo select, .combo input {
    flex: 1;
    height: 19px;
    appearance: none;
    padding-left: 2px;
    margin-right: 4px;
    border-right: 1px solid #aaa;
    background: #fff;
}

.combo.w88 select {
    font-size: 11px;
}

.combo.off .down { background: #aaa; }
.combo.off input { color: #999; }

input[type="checkbox"] {
    appearance: none;
    display: block;
    width: 14px;
    height: 14px;
    border: 1px solid #b5b5b5;
    border-radius: 2px;
    background: linear-gradient(#fff, #ececec);
}

input[type="checkbox"]:checked::after {
    content: "";
    display: block;
    width: 12px;
    height: 12px;
    background: #5b7ba6;
    clip-path: polygon(8% 45%, 28% 35%, 45% 58%, 85% 5%, 100% 15%, 50% 92%, 38% 92%);
}

/* Scrollbars */
.vscroll, .hscroll {
    display: flex;
    min-width: 0;
    min-height: 0;
}

.vscroll { flex-direction: column; }

.vscroll button, .hscroll button {
    flex: 0 0 16px;
    display: flex;
    align-items: center;
    justify-content: center;
    background: linear-gradient(#e6e6e6, #cecece);
}

.vscroll .track {
    flex: 1;
    background: linear-gradient(90deg, #eee, #fff);
    border: solid #b5b5b5;
    border-width: 1px 0;
}

.hscroll .track {
    flex: 1;
    display: flex;
    background: linear-gradient(#eee, #fff);
    border: solid #b5b5b5;
    border-width: 0 1px;
}

.hscroll .track.end {
    justify-content: flex-end;
    padding-right: 30px;
}

.vscroll .thumb {
    background: linear-gradient(90deg, #d8d8d8, #c2c2c2);
    border-bottom: 1px solid #a8a8a8;
}

.hscroll .thumb {
    background: linear-gradient(#d8d8d8, #c2c2c2);
    border-right: 1px solid #a8a8a8;
}

.off .up, .off .down { background: #999; }

/* Rate cards */
.rates {
    flex-direction: row;
    gap: 5px;
    padding: 5px 6px 6px;
}

.rates .vscroll {
    width: 17px;
    border: 1px solid #aaa;
}

.cards {
    flex: 1;
    display: grid;
    grid-template-columns: repeat(6, minmax(0, 1fr));
    grid-auto-rows: 78px;
    gap: 6px;
    overflow: hidden;
    background: #fff;
}

.card {
    border: 1px solid #a8a8a8;
    background: #f7f7f7;
    font-size: 10px;
}

.card-head {
    display: flex;
    align-items: center;
    gap: 2px;
    height: 20px;
    padding: 2px 3px 0 5px;
    background: linear-gradient(#f0f0f0, #e2e2e2);
}

.card-head svg {
    width: 16px;
    height: 11px;
    flex: none;
}

.card-head b {
    flex: 1;
    padding-left: 1px;
    text-align: center;
    font: bold 11px/16px Roboto, sans-serif;
    color: #222;
}

.change {
    display: flex;
    justify-content: space-between;
    width: 57px;
    height: 15px;
    padding: 0 2px 0 3px;
    line-height: 13px;
    color: #fff;
    background: #4fc1fb;
    border: 1px solid #1fa9f5;
    white-space: nowrap;
}

.change.plus {
    background: #fba44c;
    border-color: #f58a1f;
}

.change.flat {
    color: #000;
    background: #fff;
    border-color: #ddd;
}

.range {
    display: grid;
    grid-template-columns: 1fr 32px 1fr;
    gap: 3px;
    height: 13px;
    margin: 4px 3px 3px;
    line-height: 11px;
}

.range > span {
    display: flex;
    justify-content: space-between;
    padding: 0 2px;
    background: #fff;
    border: 1px solid #ddd;
}

.range .spread {
    justify-content: center;
    color: #fff;
    background: linear-gradient(#444, #111);
    border-color: #555;
}

.quotes {
    display: grid;
    grid-template-columns: 1fr 1fr;
    gap: 2px;
    height: 33px;
    margin: 0 3px;
}

.quotes button {
    display: flex;
    flex-direction: column;
    padding: 2px 4px 0 3px;
    color: #fff;
    background: linear-gradient(#444, #0c0c0c);
    border: 1px solid #555;
    text-align: left;
    font: 9px/9px Roboto, sans-serif;
}

.price {
    display: flex;
    align-items: baseline;
    justify-content: flex-end;
    align-self: stretch;
    font: 500 13px/18px Roboto, sans-serif;
}

.price b { font-size: 19px; }

.price sup {
    align-self: flex-start;
    font-size: 13px;
    line-height: 15px;
    padding-left: 1px;
}

/* Listings */
.listing {
    flex: 1;
    min-height: 0;
    display: grid;
    grid-template-columns: minmax(0, 1fr) 16px;
    grid-template-rows: 23px minmax(0, 1fr) 17px;
    border: 1px solid #aaa;
    background: #f1f1f1;
}

.head {
    overflow: hidden;
}

.listing table, .headlines table {
    width: 100%;
    table-layout: fixed;
    border-collapse: collapse;
}

.listing .w351 { width: 351px; }
.listing .w378 { width: 378px; }

th {
    height: 23px;
    padding: 0;
    font-weight: normal;
    white-space: nowrap;
    border-right: 1px solid #b0b0b0;
    border-bottom: 1px solid #aaa;
    background: linear-gradient(#f3f3f3, #e0e0e0);
}

th.tight {
    font-size: 10px;
}

th.first {
    text-align: left;
    padding-left: 4px;
}

th input[type="checkbox"] {
    margin: 0 auto;
}

.corner {
    display: flex;
    align-items: center;
    justify-content: center;
    border-bottom: 1px solid #aaa;
    background: linear-gradient(#f3f3f3, #e0e0e0);
}

.corner svg {
    width: 11px;
    height: 13px;
}

.rows {
    border-right: 1px solid #aaa;
}

.rows.frozen {
    margin-left: 22px;
    border-left: 1px solid #aaa;
}

.listing .hscroll {
    border: solid #aaa;
    border-width: 1px 1px 0 0;
}

.listing .hscroll.frozen {
    margin-left: 22px;
    border-left-width: 1px;
}

.listing .vscroll {
    height: 100%;
    border-bottom: 1px solid #aaa;
    margin-bottom: -1px;
}

hr {
    width: 100%;
    flex: none;
    margin: 0 0 1px;
    border: 0;
    border-top: 1px solid #aaa;
}

/* News */
.active .content {
    padding-top: 6px;
    gap: 10px;
}

.news-search {
    flex: none;
    display: flex;
    align-items: center;
    height: 24px;
    color: #a2a2a2;
    white-space: nowrap;
}

.keyword {
    flex: 1;
    height: 24px;
    border: 1px solid #aaa;
    background: #fff;
    color: #000;
}

.find {
    display: flex;
    align-items: center;
    justify-content: center;
    width: 21px;
    margin: 0 10px 0 5px;
    border-color: #b5b5b5;
    background: #e2e2e2;
}

.find svg {
    width: 16px;
    height: 16px;
}

.news-search label {
    display: flex;
    align-items: center;
    gap: 4px;
}

.news-search .red-only {
    width: 153px;
    margin-left: 24px;
}

.auto { width: 80px; }
.updated { width: 124px; }

.news-search .w60 {
    margin-left: 10px;
}

.news {
    flex: 1;
    min-height: 0;
    display: grid;
    grid-template-columns: 208px minmax(0, 1fr);
    gap: 5px;
}

.categories {
    display: grid;
    grid-template-columns: 1fr 17px;
    grid-template-rows: 23px minmax(0, 1fr);
    min-height: 0;
    border: 1px solid #aaa;
    background: #fff;
}

.list-head, .list-corner {
    color: #aaa894;
    text-align: center;
    line-height: 23px;
    background: linear-gradient(#f3f3f3, #e0e0e0);
    border-bottom: 1px solid #aaa;
}

.list-corner {
    border-left: 1px solid #aaa;
}

.categories ul {
    margin: 0;
    padding: 0;
    list-style: none;
    overflow: hidden;
}

.categories li {
    height: 22px;
    padding-left: 3px;
    line-height: 22px;
}

.categories li:nth-child(even) {
    background: #edf0f0;
}

.categories .vscroll, .side .vscroll, .detail .vscroll {
    border-left: 1px solid #aaa;
}

.articles {
    display: flex;
    flex-direction: column;
    min-height: 0;
}

.headlines {
    flex: none;
    display: grid;
    grid-template-columns: 1fr 17px;
    height: 103px;
    border: 1px solid #aaa;
    background: #f1f1f1;
}

.headlines table {
    align-self: start;
}

.headlines th {
    color: #aaa894;
}

.headlines th:last-child {
    border-right: 0;
}

.headlines td {
    height: 22px;
    padding: 0 3px;
    background: #fff;
    border-bottom: 1px solid #aaa;
    border-right: 1px solid #e4e4e4;
}

.side {
    display: grid;
    grid-template-rows: 23px 1fr;
}

fieldset {
    flex: 1;
    min-width: 0;
    min-height: 0;
    margin: 3px 2px 2px;
    padding: 0 7px 7px;
    border: 1px solid #aaa;
}

legend {
    padding: 0 3px;
    font-size: 13px;
    line-height: 19px;
}

.detail {
    display: grid;
    grid-template-columns: 1fr 17px;
    height: 75px;
    border: 1px solid #aaa;
    background: #fff;
}

.detail p {
    margin: 0;
    padding: 2px 3px;
    line-height: 14px;
    font-feature-settings: normal;
}

.detail a {
    font-family: "Liberation Mono", monospace;
    color: #00f;
    text-decoration: underline;
}

/* Charts */
.content.chart {
    display: grid;
    grid-template-columns: 22px minmax(0, 1fr);
    grid-template-rows: 22px minmax(0, 1fr);
    gap: 5px 6px;
    padding: 6px 6px 9px;
}

.toolbox {
    grid-row: 2;
    display: flex;
    flex-direction: column;
    gap: 3px;
    padding-top: 1px;
}

.toolbox button {
    width: 22px;
    height: 22px;
    flex: none;
    border: 1px solid #a5a5a5;
    border-radius: 2px;
    background: linear-gradient(#fafafa, #dedede);
}

.toolbox svg, .info svg {
    width: 20px;
    height: 20px;
}

.toolbox button.pressed {
    background: #bdbdbd;
    border-color: #888;
}

.zoom-pair {
    display: flex;
    flex-direction: column;
    gap: 1px;
}

.icon-text {
    font: bold 7px "Liberation Sans", sans-serif;
    fill: #222;
}

.chart-tools {
    grid-column: 2;
    display: flex;
    gap: 6px;
}

.chart-tools .date {
    width: 82px;
    margin-left: 10px;
}

.chart-tools .date input {
    text-align: center;
    padding-left: 22px;
    white-space: pre;
}

.info {
    width: 22px;
    height: 22px;
    margin-left: 10px;
    border-radius: 2px;
}

.chart-box {
    grid-column: 2;
    display: flex;
    flex-direction: column;
    min-height: 0;
    border: 1px solid #aaa;
    background: #f1f1f1;
}

.fold {
    height: 11px;
    flex: none;
    display: flex;
    justify-content: center;
    border-bottom: 1px solid #aaa;
}

.fold button {
    display: flex;
    align-items: center;
    justify-content: center;
    width: 45px;
    margin-right: 20px;
    border: solid #aaa;
    border-width: 0 1px;
    background: linear-gradient(#e4e4e4, #cfcfcf);
}

.fold .up {
    width: 9px;
    height: 4px;
}

.plot {
    flex: 1;
    min-height: 0;
    width: 100%;
}

.plot text {
    font-size: 12px;
}

.plot .axis {
    font-size: 11px;
}

.chart-foot {
    height: 17px;
    flex: none;
    display: flex;
    border-top: 1px solid #aaa;
}

.ohlc {
    display: grid;
    grid-template-columns: repeat(4, 76px);
    width: 300px;
    padding-left: 4px;
    font-size: 11px;
    white-space: nowrap;
}

.chart-foot .hscroll {
    flex: 1;
    border: solid #aaa;
    border-width: 0 1px;
}

.count {
    width: 28px;
    background: #fff;
    text-align: center;
}

.mini {
    display: flex;
    align-items: center;
    justify-content: center;
    width: 16px;
    border-left: 1px solid #aaa;
    background: linear-gradient(#e6e6e6, #cecece);
}

.mini svg {
    width: 9px;
    height: 9px;
}

.gap {
    width: 15px;
    border-left: 1px solid #aaa;
}

/* Bottom tabs */
.tabs {
    flex: none;
    display: flex;
    gap: 1px;
    height: 28px;
    padding-left: 8px;
    border-top: 3px solid #e6e6e6;
    background: linear-gradient(#7c7c7c, #969696 15%, #c6c6c6);
}

.tab {
    width: 117px;
    height: 21px;
    border: 1px solid #8a8a8a;
    border-top: 0;
    border-radius: 0 0 4px 4px;
    background: linear-gradient(#acacac, #a2a2a2);
}

.tab.current {
    background: #e0e0e0;
}

.add {
    margin-left: auto;
    padding: 0 9px;
}

.add svg {
    width: 12px;
    height: 12px;
}
```

FILE: script.js
```js
// window buttons
document.querySelectorAll(".controls").forEach((el) => {
    const names = { pin: "切り離す", min: "最小化", max: "最大化", close: "閉じる" };
    el.innerHTML = Object.keys(names)
        .map((id) => `<button class="w26" aria-label="${names[id]}"><svg><use href="#${id}"/></svg></button>`)
        .join("");
});

// chart tool buttons
const tool = (id, cls = "") => `<button class="${cls}" aria-label="${id}"><svg><use href="#c-${id}"/></svg></button>`;

document.querySelectorAll(".toolbox").forEach((el) => {
    el.innerHTML = tool("cursor", "pressed") + tool("pencil") + tool("eraser") +
        `<div class="zoom-pair">${tool("zoomin")}${tool("zoomout")}</div>` +
        ["lines", "scale", "shapes", "eye", "print", "save"].map((id) => tool(id)).join("");
});

// pair, flags, change, high, spread, low, bid, ask
const rates = [
    ["USD/JPY", "us jp", "- 0.046", "135.728", "0.2", "135.301", "135. 53 4", "135. 53 6"],
    ["EUR/JPY", "eu jp", "- 0.194", "144.265", "0.4", "143.913", "143. 95 5", "143. 95 9"],
    ["EUR/USD", "eu us", "- 0.00112", "1.06389", "0.3", "1.06198", "1.06 21 2", "1.06 21 5"],
    ["AUD/JPY", "au jp", "- 0.376", "92.996", "0.5", "92.393", "92. 55 1", "92. 55 6"],
    ["GBP/JPY", "gb jp", "- 0.332", "167.766", "0.9", "167.144", "167. 33 6", "167. 34 5"],
    ["NZD/JPY", "nz jp", "- 0.362", "87.669", "1.0", "87.150", "87. 27 9", "87. 28 9"],
    ["CAD/JPY", "ca jp", "- 0.227", "100.122", "1.4", "99.762", "99. 86 2", "99. 87 6"],
    ["CHF/JPY", "ch jp", "- 0.211", "146.056", "1.8", "145.714", "145. 78 6", "145. 80 4"],
    ["HKD/JPY", "hk jp", "- 0.013", "17.447", "2.0", "17.406", "17. 41 9", "17. 43 9"],
    ["GBP/USD", "gb us", "- 0.00202", "1.23740", "1.0", "1.23425", "1.23 46 5", "1.23 47 5"],
    ["USD/CHF", "us ch", "+ 0.00105", "0.92967", "1.6", "0.92832", "0.92 95 3", "0.92 96 9"],
    ["ZAR/JPY", "za jp", "- 0.015", "7.859", "0.5", "7.832", "7. 84 1", "7. 84 6"],
    ["AUD/USD", "au us", "- 0.00261"],
    ["NZD/USD", "nz us", "- 0.00256"],
    ["EUR/AUD", "eu au", "+ 0.00430"],
    ["TRY/JPY", "tr jp", "+ 0.003"],
    ["CNH/JPY", "cn jp", "+ 0.000"],
    ["NOK/JPY", "no jp", "- 0.030"]
];

function quote(label, value) {
    const [lead, main, last] = value.split(" ");
    return `<button>${label}<span class="price">${lead}<b>${main}</b><sup>${last}</sup></span></button>`;
}

document.getElementById("cards").innerHTML = rates.map(([pair, flags, change, high, spread, low, bid, ask]) => {
    const tone = change === "+ 0.000" ? "flat" : change[0] === "+" ? "plus" : "";
    const flagHtml = flags.split(" ").map((f) => `<svg><use href="#flag-${f}"/></svg>`).join("");
    const body = high ? `
        <div class="range"><span><span>H</span>${high}</span><span class="spread">${spread}</span><span><span>L</span>${low}</span></div>
        <div class="quotes">${quote("BID", bid)}${quote("ASK", ask)}</div>` : "";
    return `<article class="card">
        <div class="card-head">${flagHtml}<b>${pair}</b><div class="change ${tone}"><span>C</span><span>${change.replace("-", "−")}</span></div></div>${body}
    </article>`;
}).join("");

// Chart geometry is kept in thirds of a pixel. Candles: colour, body top, body bottom, high, low.
const STEP = 23.61;

const candles60 = "B758,768,744,774 R753,768,749,773 R747,755,743,760 R741,748,732,750 R741,744,735,748 R741,745,737,748 R744,752,741,754 R744,748,741,762 R741,745,717,748 B742,806,740,812 R802,806,778,815 B802,831,800,845 R813,831,810,836 R799,815,796,830 B799,815,796,820 R777,815,770,824 B777,788,766,792 B787,794,774,801 B793,808,792,818 B808,833,799,851 B832,838,826,845 R807,839,741,860 R775,809,766,818 R751,776,714,812 B749,773,746,790 R763,773,760,780 B763,769,758,780 R763,769,758,777 R739,764,736,767 B739,752,733,756 R753,768,747,771 R736,755,722,758 R727,737,718,741 R721,728,693,734 R717,721,708,730 B717,724,713,728 R711,725,708,728 R703,713,691,713 B706,721,697,725 B721,740,715,746 R721,740,711,744 B720,746,712,748 R739,747,727,750 R724,739,721,742 R696,724,692,731 B696,704,675,712 R684,704,682,716 R661,686,654,700 R651,662,633,670 R644,653,627,657 R622,644,618,648 R618,622,608,628 B618,626,614,632 B625,638,620,642 B637,650,628,658 R650,653,633,653 R618,650,605,654 B618,632,610,640 B630,634,618,642 R626,635,622,642 B625,629,597,634 B628,643,622,648 R633,643,629,656 B633,658,622,670 R633,658,628,664 R631,635,618,642 B631,638,613,642 B638,643,632,652 B643,671,640,676 B671,911,657,936 B911,929,898,968 R904,929,886,936 B905,911,897,938 R888,911,886,917 R864,892,861,896 B865,875,862,884 R856,875,854,878 B856,862,853,865 B866,878,862,882 R861,878,847,882 B862,884,850,893 R862,884,852,897 B862,873,854,880 B871,875,866,880 R868,872,860,878";

const candles120 = "R1071,1148,1053,1151 R937,1073,912,1077 R910,938,891,978 B910,983,877,993 R814,983,801,992 R658,815,642,815 R631,658,620,690 R598,631,588,650 B598,623,594,640 B625,668,594,716 R564,668,522,714 B564,591,561,625 R492,591,474,606 B492,637,468,665 R636,640,592,656 B636,760,633,785 R660,758,640,762 R631,661,610,710 R552,632,550,638 B553,572,544,595 R565,571,543,576 R528,567,495,608 B528,557,480,600 R471,557,454,557 R422,472,373,522 B422,461,381,494 B460,466,411,480 B465,520,402,530 B519,634,507,696 B633,653,592,696 B652,698,647,732 R682,698,680,722 R679,683,643,690 R640,683,628,728 R567,640,552,652 B567,571,507,612 B570,622,522,640 R612,622,567,656 R586,614,526,618 B586,635,570,640 B634,662,604,710 B661,680,636,710 R646,680,634,692 R632,647,616,648 B632,638,630,650 R632,638,588,665 B634,748,630,770 B748,775,745,833 R772,776,737,807 R720,773,678,792 B721,760,698,779 B758,821,744,849 R696,821,633,867 R690,699,582,770 R685,691,667,705 R628,685,626,695 B628,653,621,660 R655,682,640,686 R603,658,585,662 R583,604,540,614 R577,583,570,613 B577,590,531,597 Y589,591,567,640 B589,628,573,645 R543,628,540,635 R523,544,504,582 R457,524,423,543 R397,457,388,474 B397,403,375,417 B403,453,400,463 R391,452,366,455 B391,421,379,434 R412,421,350,437 B412,422,400,456 R421,423,405,492 B421,427,378,440 B427,491,423,507 B490,998,468,1074 R964,998,916,1017 R874,965,865,977 R856,874,855,909 B856,899,853,902 B898,914,837,927 R883,914,849,933 R878,883,861,907";

const colours = { R: ["#b01616", "#ff2222"], B: ["#2a2aa2", "#3f3fdc"], Y: ["#b08a00", "#b08a00"] };

function drawChart(svg, c) {
    const w = svg.clientWidth;
    const h = svg.clientHeight;
    const right = w - 65;
    const bottom = h - 3;
    const X = (v) => Math.round((v - 117) / 3);
    const Y = (v) => Math.round((v - c.top) / 3);
    const vline = (v) => `M${X(v) + 0.5} 14V${bottom}`;
    const hline = (v, end = right) => `M4 ${Y(v) + 0.5}H${end}`;
    const path = (d, colour) => `<path d="${d}" stroke="${colour}" fill="none"/>`;

    let minor = "";
    for (let v = 145; X(v) < right; v += STEP) minor += vline(v);
    for (let v = c.grid; Y(v) < bottom; v += c.row / 10) minor += hline(v);
    for (let v = c.grid; Y(v) > 15; v -= c.row / 10) minor += hline(v);

    let major = c.half.map((v) => vline(v)).join("");
    c.prices.forEach((p, i) => { major += hline(c.grid + i * c.row); });

    let out = `<rect x="3" y="14" width="${right - 3}" height="${bottom - 14}"/>`;
    out += `<g shape-rendering="crispEdges">${path(minor, "#282828")}${path(major, "#414141")}`;
    out += path(c.days.map((v) => vline(v)).join(""), "#7a7a7a") + path(hline(c.cross), "#8a8a8a");
    out += path(vline(c.week), "#a8a000") + path(hline(c.last, X(2130)), "#ff9a00") + "</g>";

    const lines = c.lines.map(([colour, pts]) => {
        const d = pts.split(" ").map((p) => p.split(",").map(Number)).map(([x, y]) => `${((x - 117) / 3).toFixed(1)},${((y - c.top) / 3).toFixed(1)}`).join(" ");
        return `<polyline points="${d}" fill="none" stroke="${colour}"/>`;
    }).join("");

    const bars = c.candles.split(" ").map((s, i) => {
        const [fill, edge] = colours[s[0]];
        const [top, base, high, low] = s.slice(1).split(",").map(Number);
        const x = X(157 + (i - 1) * STEP);
        const left = Math.max(x - 3, 4);
        return `<path d="M${x + 0.5} ${Y(high)}V${Y(low)}" stroke="${edge}"/>` +
            `<rect x="${left + 0.5}" y="${Y(top) + 0.5}" width="${x + 3 - left}" height="${Math.max(Y(base) - Y(top) - 1, 0.5)}" fill="${fill}" stroke="${edge}"/>`;
    }).join("");

    const candleLayer = `<g shape-rendering="crispEdges">${bars}</g>`;
    out += c.linesOnTop ? candleLayer + lines : lines + candleLayer;

    const arrow = Y(c.last) + 0.5;
    out += `<path d="M${X(2143)} ${arrow}l6 -5.500v11z" fill="#ff3366"/>`;
    c.notes.forEach(([x, y, text, colour]) => {
        out += `<text x="${X(x)}" y="${Y(y)}" fill="${colour}">${text}</text>`;
    });
    c.dates.forEach(([x, text]) => { out += `<text class="axis" x="${X(x)}" y="11">${text}</text>`; });
    c.prices.forEach((p, i) => { out += `<text class="axis" x="${right + 14}" y="${Y(c.grid + i * c.row) + 4}">${p}</text>`; });
    out += `<rect x="0.500" y="0.500" width="93" height="13" fill="#40597f" stroke="#1b3059"/><text class="axis" x="2" y="11" fill="#fff">${c.start}</text>`;
    svg.innerHTML = out;
}

const chart60 = {
    top: 222, grid: 370, row: 111, cross: 701, last: 865, week: 829,
    half: [382, 948, 1514, 2081], days: [139, 664, 1231, 1798],
    start: "2022/12/09 01:00",
    dates: [[661, "12/10"], [826, "12/12"], [1228, "12/13"], [1798, "12/14"]],
    prices: ["140.000", "139.000", "138.000", "137.000", "136.000", "135.000", "134.000", "133.000"],
    notes: [
        [498, 906, "135.603", "#00cc00"], [1415, 597, "137.963", "#ff6a00"], [1652, 1014, "134.650", "#00cc00"],
        [2171, 862, "135.536", "#ff3366"], [2171, 898, "135.534", "#00b4ff"]
    ],
    candles: candles60,
    lines: [
        ["#5ea4f0", "130,670 182,670 250,677 322,685 346,678 372,678 394,667 418,661 442,661 465,666 490,676 536,685 560,685 607,680 640,684 680,685 725,695 772,702 818,706 841,700 865,690 889,683 937,666 983,655 1006,643 1030,640 1054,643 1078,649 1102,666 1125,679 1148,679 1172,673 1219,665 1243,653 1290,617 1335,586 1361,571 1408,560 1432,556 1456,547 1480,541 1525,535 1549,535 1573,538 1597,546 1644,573 1666,577 1690,591 1714,601 1738,598 1762,468 1786,406 1832,355 1855,349 1890,346 1928,349 1975,372 2020,406 2068,451 2117,510"],
        ["#0f78e6", "130,690 182,693 206,697 250,697 277,699 322,703 370,703 394,694 442,694 465,698 487,708 536,715 607,715 652,717 676,717 725,726 772,733 818,730 841,732 865,725 889,717 913,710 961,695 1006,683 1030,679 1054,679 1078,682 1102,691 1140,699 1172,697 1219,690 1250,680 1290,656 1335,624 1361,613 1385,604 1432,598 1480,588 1525,577 1573,577 1621,589 1644,597 1690,608 1714,613 1738,610 1762,530 1786,490 1810,474 1855,467 1900,471 1928,479 1975,501 2020,532 2068,569 2117,614"],
        ["#1420d8", "130,739 182,738 230,732 277,732 322,739 370,746 418,754 465,762 511,768 560,775 607,781 652,785 700,789 772,790 818,790 865,786 913,778 961,766 1006,759 1054,752 1102,747 1148,742 1172,735 1219,724 1267,710 1314,701 1362,693 1430,685 1479,679 1525,670 1573,658 1621,652 1668,643 1738,637 1762,648 1786,663 1833,691 1880,716 1951,745 2020,782 2068,802 2117,823"],
        ["#0f78e6", "130,784 206,779 230,772 322,772 346,786 370,794 394,815 418,821 465,827 536,829 560,834 583,841 607,849 631,852 680,852 725,849 772,847 865,847 937,841 1030,837 1054,830 1078,815 1102,799 1125,782 1148,777 1196,772 1240,772 1290,777 1335,778 1362,776 1430,770 1500,763 1530,757 1573,741 1621,712 1668,686 1710,661 1735,663 1750,735 1775,800 1786,834 1810,880 1833,918 1860,945 1904,978 1951,1003 1998,1023 2022,1030 2070,1035 2117,1036"],
        ["#5ea4f0", "130,807 157,803 206,799 230,790 322,792 346,810 370,815 394,834 418,848 442,855 470,859 536,859 560,866 583,876 607,884 652,886 680,886 725,880 772,877 818,874 865,877 900,874 937,878 961,871 1010,877 1030,874 1054,864 1078,847 1102,821 1125,803 1148,796 1172,798 1210,793 1267,797 1290,803 1314,811 1362,818 1430,815 1479,809 1505,807 1530,798 1573,780 1621,742 1650,715 1690,687 1715,674 1738,677 1750,760 1762,845 1786,926 1810,975 1833,1022 1855,1056 1904,1106 1951,1135 1998,1153 2025,1157 2070,1153 2117,1141"]
    ]
};

const chart120 = {
    top: 228, grid: 340, row: 108.75, cross: 421, last: 877, week: 1468,
    half: [382, 664, 948, 1231, 1537, 1819, 2104], days: [241, 523, 805, 1090, 1373, 1678, 1963],
    start: "2022/12/05 14:00",
    dates: [[520, "12/07"], [802, "12/08"], [1087, "12/09"], [1372, "12/10"], [1464, "12/12"], [1677, "12/13"], [1963, "12/14"]],
    prices: ["138.000", "137.500", "137.000", "136.500", "136.000", "135.500", "135.000", "134.500", "134.000"],
    notes: [
        [566, 372, "137.860", "#ff6a00"], [1697, 352, "137.963", "#ff6a00"], [1227, 912, "135.603", "#00cc00"],
        [1817, 1120, "134.650", "#00cc00"], [2171, 873, "135.536", "#ff3366"], [2171, 910, "135.534", "#00b4ff"]
    ],
    candles: candles120,
    linesOnTop: true,
    lines: [
        ["#8a10e8", "130,1110 136,1108 157,1055 181,1003 206,996 229,932 253,850 277,772 301,716 322,686 346,680 370,640 394,625 418,583 442,598 465,605 487,660 511,661 536,653 560,620 607,600 631,580 652,563 676,528 700,498 724,486 748,479 772,493 795,545 818,583 841,620 865,640 889,653 913,650 937,628 961,604 983,610 1006,611 1030,606 1054,610 1078,625 1102,646 1125,646 1148,641 1196,640 1219,677 1243,710 1267,730 1291,728 1314,740 1338,766 1362,745 1385,727 1408,712 1432,688 1456,675 1480,667 1502,648 1525,625 1549,610 1597,598 1621,607 1644,590 1666,565 1690,530 1714,487 1738,460 1762,455 1786,434 1810,430 1832,424 1904,424 1928,443 1940,540 1951,625 1975,740 1997,788 2020,808 2044,836 2068,862 2092,871 2117,875"],
        ["#e0660a", "130,945 206,945 229,937 253,915 301,877 322,854 346,842 394,802 418,782 442,769 465,760 490,759 536,743 583,719 631,695 676,668 724,635 748,622 772,616 818,618 860,628 889,634 937,630 961,625 1006,622 1040,619 1078,625 1125,631 1196,631 1219,636 1267,657 1314,670 1338,683 1420,684 1432,681 1480,679 1525,665 1573,652 1644,645 1668,632 1738,587 1762,577 1786,562 1832,541 1880,525 1904,516 1928,514 1940,535 1975,583 1997,604 2044,640 2080,670 2117,695"]
    ]
};

function drawAll() {
    drawChart(document.getElementById("chart60"), chart60);
    drawChart(document.getElementById("chart120"), chart120);
}

drawAll();
window.addEventListener("resize", drawAll);
```
